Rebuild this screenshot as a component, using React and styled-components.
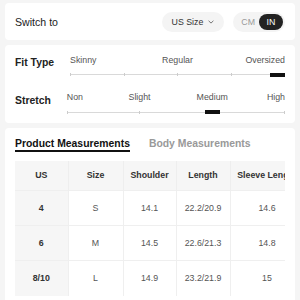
import React from "react";
import styled, { createGlobalStyle } from "styled-components";

const Global = createGlobalStyle`
  html, body { margin: 0; padding: 0; background: #f5f5f5; }
  body { font-family: "Liberation Sans", Arial, Helvetica, sans-serif; color: #222; }
  * { box-sizing: border-box; }
`;

const Page = styled.div`
  display: flex;
  flex-direction: column;
  gap: 5px;
  padding: 3px 5px 0;
  width: 300px;
  height: 300px;
  overflow: hidden;
`;

const Card = styled.div`
  background: #fff;
  border-radius: 4px;
  padding: ${(p) => p.$pad};
`;

const HeaderCard = styled(Card)`
  display: flex;
  align-items: center;
  justify-content: space-between;
`;

const Title = styled.div`
  font-size: 10.6px;
  line-height: 12px;
  color: #222;
`;

const Controls = styled.div`
  display: flex;
  align-items: center;
  gap: 9px;
`;

const SizeSelect = styled.div`
  display: flex;
  align-items: center;
  gap: 5px;
  height: 20px;
  padding: 0 10px;
  background: #f4f4f4;
  border-radius: 10px;
  font-size: 8.8px;
  color: #333;
`;

const UnitToggle = styled.div`
  display: flex;
  align-items: center;
  gap: 4px;
  height: 20px;
  padding: 0 2px 0 8px;
  background: #f4f4f4;
  border-radius: 10px;
  font-size: 8.8px;
`;

const Unit = styled.span`
  display: flex;
  align-items: center;
  justify-content: center;
  height: 16px;
  min-width: ${(p) => (p.$active ? "24px" : "0")};
  border-radius: 8px;
  background: ${(p) => (p.$active ? "#222" : "transparent")};
  color: ${(p) => (p.$active ? "#fff" : "#999")};
`;

const FitCard = styled(Card)`
  display: flex;
  flex-direction: column;
  gap: 14.5px;
`;

const Row = styled.div`
  display: flex;
  align-items: flex-start;
  gap: 16px;
`;

const RowLabel = styled.div`
  font-size: 10.4px;
  font-weight: 700;
  line-height: 12px;
  margin-top: 2.5px;
  color: #222;
  white-space: nowrap;
`;

const Scale = styled.div`
  flex: 1;
  display: flex;
  flex-direction: column;
  gap: 6px;
`;

const ScaleLabels = styled.div`
  display: grid;
  grid-template-columns: repeat(${(p) => p.$cols}, minmax(0, 1fr));
  font-size: 8.8px;
  line-height: 11px;
  color: #555;
`;

const ScaleLabel = styled.span`
  grid-row: 1;
  grid-column: ${(p) => p.$col} / span 2;
  justify-self: ${(p) => p.$align};
  white-space: nowrap;
`;

const Track = styled.div`
  position: relative;
  height: 6px;
  display: flex;
  align-items: center;
  justify-content: space-between;
  &::before {
    content: "";
    position: absolute;
    left: 0;
    right: 0;
    top: 2.5px;
    height: 1px;
    background: #d9d9d9;
  }
`;

const Tick = styled.span`
  position: relative;
  width: 1px;
  height: 3px;
  background: #cccccc;
`;

const Bar = styled.span`
  position: absolute;
  top: 1px;
  width: 15px;
  height: 4px;
  background: #111;
`;

const Tabs = styled.div`
  display: flex;
  align-items: flex-end;
  gap: 19px;
`;

const Tab = styled.div`
  font-size: 10.4px;
  font-weight: 700;
  line-height: 11.5px;
  padding-bottom: 0.5px;
  color: ${(p) => (p.$active ? "#111" : "#999")};
  border-bottom: 2px solid ${(p) => (p.$active ? "#111" : "transparent")};
  white-space: nowrap;
`;

const TableWrap = styled.div`
  margin-top: 9px;
  overflow-x: auto;
  scrollbar-width: none;
  &::-webkit-scrollbar { display: none; }
`;

const Table = styled.table`
  border-collapse: collapse;
  table-layout: fixed;
  width: 289px;
  font-size: 8.8px;
`;

const Th = styled.th`
  height: 30px;
  padding: 0;
  font-weight: 700;
  color: #333;
  background: #f6f6f6;
  text-align: center;
  border-right: 1px solid #eeeeee;
  white-space: nowrap;
`;

const Td = styled.td`
  height: 35px;
  padding: 0;
  text-align: center;
  font-weight: ${(p) => (p.$head ? 700 : 400)};
  color: ${(p) => (p.$head ? "#333" : "#555")};
  background: ${(p) => (p.$head ? "#f6f6f6" : "#fff")};
  border-right: 1px solid #efefef;
  border-top: 1px solid #efefef;
`;

const Chevron = () => (
  <svg width="6" height="4" viewBox="0 0 6 4" fill="none">
    <path d="M0.6 0.8 L3 3.1 L5.4 0.8" stroke="#666" strokeWidth="0.9" />
  </svg>
);

function FitScale({ label, ticks, labels, value }) {
  const cols = 2 * (ticks - 1);
  const pct = (value / (ticks - 1)) * 100;
  let barStyle;
  if (value === 0) barStyle = { left: 0 };
  else if (value === ticks - 1) barStyle = { right: 0 };
  else barStyle = { left: `calc(${pct}% - 7.5px)` };
  return (
    <Row>
      <RowLabel>{label}</RowLabel>
      <Scale>
        <ScaleLabels $cols={cols}>
          {labels.map(([text, k]) => {
            const last = k === ticks - 1;
            const col = k === 0 ? 1 : last ? cols - 1 : 2 * k;
            const align = k === 0 ? "start" : last ? "end" : "center";
            return (
              <ScaleLabel key={text} $col={col} $align={align}>
                {text}
              </ScaleLabel>
            );
          })}
        </ScaleLabels>
        <Track>
          {Array.from({ length: ticks }).map((_, i) => (
            <Tick key={i} />
          ))}
          <Bar style={barStyle} />
        </Track>
      </Scale>
    </Row>
  );
}

const columns = [
  { title: "US", w: 53 },
  { title: "Size", w: 55 },
  { title: "Shoulder", w: 53 },
  { title: "Length", w: 54 },
  { title: "Sleeve Length", w: 74 },
];

const rows = [
  ["4", "S", "14.1", "22.2/20.9", "14.6"],
  ["6", "M", "14.5", "22.6/21.3", "14.8"],
  ["8/10", "L", "14.9", "23.2/21.9", "15"],
];

export default function App() {
  return (
    <>
      <Global />
      <Page>
        <HeaderCard $pad="9px 10px 8px">
          <Title>Switch to</Title>
          <Controls>
            <SizeSelect>
              US Size <Chevron />
            </SizeSelect>
            <UnitToggle>
              <Unit>CM</Unit>
              <Unit $active>IN</Unit>
            </UnitToggle>
          </Controls>
        </HeaderCard>

        <FitCard $pad="9.5px 10px 7.5px">
          <FitScale
            label="Fit Type"
            ticks={5}
            labels={[["Skinny", 0], ["Regular", 2], ["Oversized", 4]]}
            value={4}
          />
          <FitScale
            label="Stretch"
            ticks={4}
            labels={[["Non", 0], ["Slight", 1], ["Medium", 2], ["High", 3]]}
            value={2}
          />
        </FitCard>

        <Card $pad="10px 10px 10px">
          <Tabs>
            <Tab $active>Product Measurements</Tab>
            <Tab>Body Measurements</Tab>
          </Tabs>
          <TableWrap>
            <Table>
              <colgroup>
                {columns.map((c) => (
                  <col key={c.title} style={{ width: c.w }} />
                ))}
              </colgroup>
              <thead>
                <tr>
                  {columns.map((c) => (
                    <Th key={c.title}>{c.title}</Th>
                  ))}
                </tr>
              </thead>
              <tbody>
                {rows.map((r) => (
                  <tr key={r[0]}>
                    {r.map((v, i) => (
                      <Td key={i} $head={i === 0}>
                        {v}
                      </Td>
                    ))}
                  </tr>
                ))}
              </tbody>
            </Table>
          </TableWrap>
        </Card>
      </Page>
    </>
  );
}
